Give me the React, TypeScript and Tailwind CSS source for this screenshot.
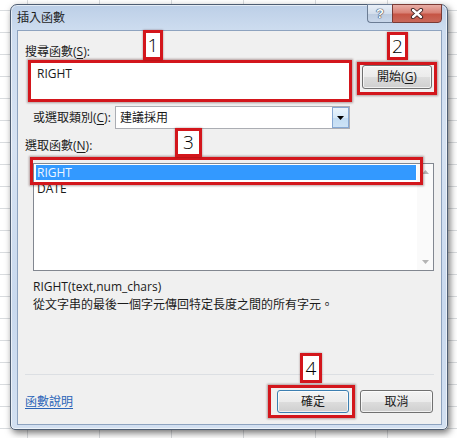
import React from "react"

const font = "font-['Open_Sans','Noto_Sans_CJK_TC',sans-serif]"
const red = "border-[3px] border-[#d3161c] shadow-[0_0_2px_1px_rgba(60,0,0,0.35)]"
const winBtn =
  "border border-[#707070] rounded-[3px] bg-[linear-gradient(to_bottom,#f3f3f3_0%,#ebebeb_50%,#dddddd_51%,#cfcfcf_100%)] shadow-[inset_0_0_0_1px_rgba(255,255,255,0.7)]"

function Badge({ n, className }: { n: string; className: string }) {
  return (
    <div
      className={`absolute bg-white border-[3px] border-[#d3161c] shadow-[0_0_2px_rgba(60,0,0,0.4)] flex items-center justify-center text-[19px] leading-none font-light text-black font-['Open_Sans',sans-serif] ${className}`}
    >
      {n}
    </div>
  )
}

function Mn({ c }: { c: string }) {
  return <span className="underline underline-offset-2">{c}</span>
}

export default function App() {
  return (
    <div
      className={`w-[457px] h-[438px] overflow-hidden bg-white bg-[repeating-linear-gradient(to_bottom,transparent_0,transparent_10px,#d9dcdf_10px,#d9dcdf_11px,transparent_11px,transparent_22px),repeating-linear-gradient(to_right,transparent_0,transparent_27px,#d9dcdf_27px,#d9dcdf_28px,transparent_28px,transparent_72px)] pt-[4px] pl-[10px] text-[12px] text-[#1a1a1a] ${font}`}
    >
      {/* dialog window */}
      <div className="w-[438px] h-[426px] rounded-t-[7px] rounded-b-[5px] border border-[#4e5d72] bg-[linear-gradient(to_bottom,#bccfe7_0px,#cddcef_25px,#d6e2f2_140px,#c9d9ee_300px,#d3e0f1_100%)] shadow-[2px_3px_7px_rgba(0,0,0,0.55),inset_0_0_0_1px_rgba(255,255,255,0.6)] flex flex-col">
        {/* title bar */}
        <div className="h-[25px] flex items-start">
          <div className="pl-[6px] pt-[5px] leading-[16px] text-[12px] text-[#1e1e1e]">插入函數</div>
          <div className="ml-auto mr-[5px] flex -mt-px">
            <div className="w-[25px] h-[19px] rounded-bl-[4px] border border-[#6b7c94] border-r-0 bg-[linear-gradient(to_bottom,#e9eff7_0%,#d3deec_50%,#bccbdf_51%,#c9d7ea_100%)] flex items-center justify-center text-[13px] font-bold text-white font-['Liberation_Sans',sans-serif] [text-shadow:0_0_1px_#2c3a50,0_0_1px_#2c3a50,0_0_1px_#2c3a50]">
              ?
            </div>
            <div className="w-[50px] h-[19px] rounded-br-[4px] border border-[#7a3a34] bg-[linear-gradient(to_bottom,#e8aea6_0%,#d98276_45%,#c65545_55%,#c9685a_100%)] flex items-center justify-center">
              <svg width="14" height="11" viewBox="0 0 14 11">
                <path d="M3 2 L11 9 M11 2 L3 9" stroke="#3a2020" strokeWidth="4.2" strokeLinecap="round" />
                <path d="M3 2 L11 9 M11 2 L3 9" stroke="#ffffff" strokeWidth="2.4" strokeLinecap="round" />
              </svg>
            </div>
          </div>
        </div>

        {/* client area */}
        <div className="ml-[6px] mr-[5px] mb-[4px] flex-1 border border-[#8ea3bf] bg-[#f0f0f0] flex flex-col px-[7px]">
          <div className="mt-[13px] h-[16px] leading-[16px]">
            搜尋函數(<Mn c="S" />):
          </div>

          <div className="flex items-start h-[42px]">
            <div className={`relative ml-[3px] w-[324px] h-[42px] bg-white ${red}`}>
              <div className="pl-[6px] pt-[3px] leading-[16px]">RIGHT</div>
              <Badge n="1" className="left-[112px] -top-[33px] w-[20px] h-[30px]" />
            </div>
            <div className="relative ml-[10px] mt-[5px] w-[70px] h-[24px]">
              <div className={`w-full h-full flex items-center justify-center ${winBtn}`}>
                開始(<Mn c="G" />)
              </div>
              <div className={`absolute -left-[5px] -top-[3px] w-[80px] h-[33px] ${red}`} />
              <Badge n="2" className="left-[25px] -top-[33px] w-[21px] h-[28px]" />
            </div>
          </div>

          <div className="mt-[4px] h-[23px] flex items-center">
            <div className="ml-[8px] w-[82px] whitespace-nowrap">
              或選取類別(<Mn c="C" />):
            </div>
            <div className="w-[235px] h-[23px] border border-[#abadb3] bg-white flex items-center">
              <span className="pl-[4px] flex-1">建議採用</span>
              <div className="w-[17px] h-[21px] border border-[#86a8d3] bg-[linear-gradient(to_bottom,#eaf4fc_0%,#d6e9f8_50%,#c2dcf3_51%,#cde3f6_100%)] flex items-center justify-center">
                <svg width="7" height="4" viewBox="0 0 7 4">
                  <path d="M0 0 H7 L3.5 4 Z" fill="#000" />
                </svg>
              </div>
            </div>
          </div>

          <div className="mt-[9px] h-[16px] leading-[16px]">
            選取函數(<Mn c="N" />):
          </div>

          <div className="relative mt-[9px] ml-[8px] w-[401px] h-[108px] border border-[#828790] bg-white flex">
            <div className="flex-1 pt-[1px] pl-[2px] pr-[1px]">
              <div className="h-[15px] leading-[15px] bg-[#3399ff] text-[#eef6ff] pl-[1px]">RIGHT</div>
              <div className="h-[15px] leading-[17px] pl-[1px]">DATE</div>
            </div>
            <div className="w-[16px] bg-[#fafafa] flex flex-col items-center justify-between py-[6px]">
              <svg width="7" height="4" viewBox="0 0 7 4">
                <path d="M0 4 H7 L3.5 0 Z" fill="#b4b4b4" />
              </svg>
              <svg width="7" height="4" viewBox="0 0 7 4">
                <path d="M0 0 H7 L3.5 4 Z" fill="#b4b4b4" />
              </svg>
            </div>
            <div className={`absolute -left-[4px] -top-[7px] w-[393px] h-[28px] ${red}`} />
            <Badge n="3" className="left-[141px] -top-[36px] w-[27px] h-[29px]" />
          </div>

          <div className="mt-[7px] ml-[8px] leading-[18px]">
            <div>RIGHT(text,num_chars)</div>
            <div>從文字串的最後一個字元傳回特定長度之間的所有字元。</div>
          </div>

          <div className="flex-1" />
          <div className="h-px bg-[#dcdfe3]" />

          <div className="mt-[15px] mb-[11px] h-[23px] flex items-center">
            <span className="text-[#2a64b8] underline underline-offset-2">函數說明</span>
            <div className="ml-auto mr-[1px] flex gap-[11px]">
              <div className="relative w-[72px] h-[23px]">
                <div className={`w-full h-full flex items-center justify-center ${winBtn} !border-[#3c7fb1] shadow-[inset_0_0_0_1px_#c4e3f7]`}>
                  確定
                </div>
                <div className={`absolute -left-[9px] -top-[5px] w-[87px] h-[33px] ${red}`} />
                <Badge n="4" className="left-[23px] -top-[37px] w-[22px] h-[30px]" />
              </div>
              <div className={`w-[73px] h-[23px] flex items-center justify-center ${winBtn}`}>取消</div>
            </div>
          </div>
        </div>
      </div>
    </div>
  )
}
